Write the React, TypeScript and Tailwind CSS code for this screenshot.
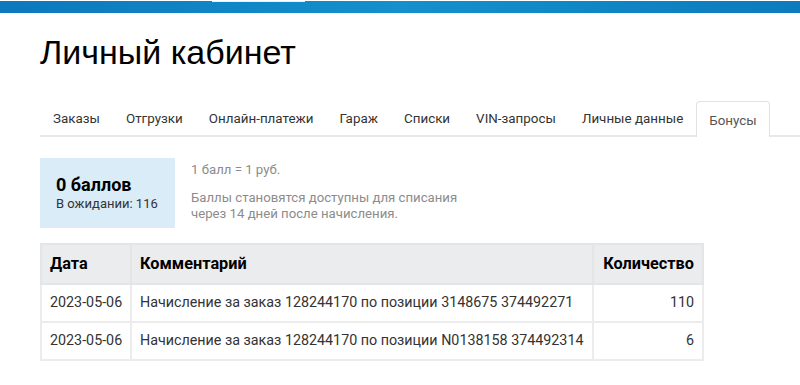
import React from 'react';

const tabs = ['Заказы', 'Отгрузки', 'Онлайн-платежи', 'Гараж', 'Списки', 'VIN-запросы', 'Личные данные', 'Бонусы'];

const rows = [
  { date: '2023-05-06', comment: 'Начисление за заказ 128244170 по позиции 3148675 374492271', qty: 110 },
  { date: '2023-05-06', comment: 'Начисление за заказ 128244170 по позиции N0138158 374492314', qty: 6 },
];

export default function App() {
  const active = 'Бонусы';

  return (
    <div className="w-[800px] h-[385px] overflow-hidden bg-white font-['Roboto',sans-serif] text-[#333]">
      {/* Header strip */}
      <div className="h-[12px] bg-gradient-to-r from-[#0c78bd] via-[#1590cc] to-[#0b7bbd] pl-[212px]">
        <div className="w-[93px] h-px mt-px bg-white/90" />
      </div>

      <div className="pl-10">
        <h1 className="mt-[19px] text-[34px] leading-[40px] font-['Liberation_Sans',Arial,sans-serif] text-black">
          Личный кабинет
        </h1>

        {/* Tabs */}
        <div className="mt-[29px] flex border-b-2 border-[#e8e8e8]">
          {tabs.map((t) =>
            t === active ? (
              <div
                key={t}
                className="-mb-[2px] px-3 pt-[3px] h-[36px] flex items-center border border-b-0 border-[#e2e2e2] rounded-t-[4px] bg-white text-[13.4px] text-[#555]"
              >
                {t}
              </div>
            ) : (
              <div key={t} className="px-[13px] pt-[3px] h-[34px] flex items-center text-[13.4px] text-[#333]">
                {t}
              </div>
            )
          )}
        </div>

        {/* Bonus summary */}
        <div className="mt-[21px] flex">
          <div className="w-[135px] h-[70px] bg-[#d9ecf7] pl-4 pt-[17px]">
            <div className="text-[18px] leading-[20px] font-bold text-black">0 баллов</div>
            <div className="text-[13px] leading-[18px] text-[#333]">В ожидании: 116</div>
          </div>
          <div className="ml-4 pt-[4px] text-[13.2px] leading-[16px] text-[#8c8c8c]">
            <div>1 балл = 1 руб.</div>
            <div className="mt-[12px]">Баллы становятся доступны для списания</div>
            <div>через 14 дней после начисления.</div>
          </div>
        </div>

        {/* History table */}
        <table className="mt-[15px] w-[664px] table-fixed border-collapse text-[14.3px] whitespace-nowrap">
          <colgroup>
            <col className="w-[90px]" />
            <col />
            <col className="w-[110px]" />
          </colgroup>
          <thead>
            <tr className="bg-[#ebecee] h-[40px]">
              <th className="border-2 border-[#e4e5e7] px-[8px] text-left text-[16.3px] font-bold text-black">Дата</th>
              <th className="border-2 border-[#e4e5e7] px-[8px] text-left text-[16.3px] font-bold text-black">Комментарий</th>
              <th className="border-2 border-[#e4e5e7] px-[8px] text-right text-[16.3px] font-bold text-black">Количество</th>
            </tr>
          </thead>
          <tbody>
            {rows.map((r, i) => (
              <tr key={i} className="h-[38px]">
                <td className="border-2 border-[#ececec] pl-[8px] pr-0 text-[#333]">{r.date}</td>
                <td className="border-2 border-[#ececec] px-[8px] text-[#333]">{r.comment}</td>
                <td className="border-2 border-[#ececec] px-[8px] text-right text-[#333]">{r.qty}</td>
              </tr>
            ))}
          </tbody>
        </table>
      </div>
    </div>
  );
}
